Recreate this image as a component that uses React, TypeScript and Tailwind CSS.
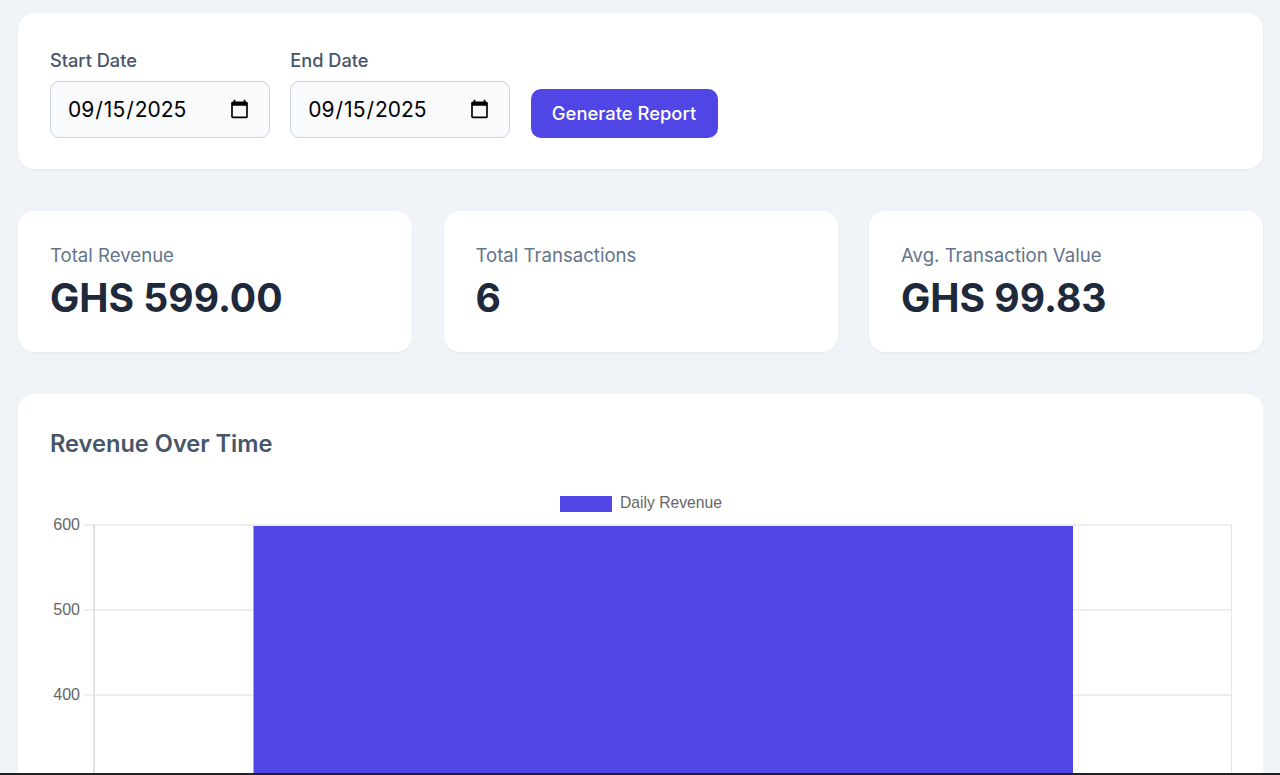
const font = { fontFamily: 'Inter, "Liberation Sans", sans-serif' };

function DateField({ label }: { label: string }) {
  return (
    <div className="flex w-[219.75px] flex-col">
      <label className="mb-[6px] h-[30px] text-[18.2px] leading-[30px] font-medium text-[#475569]">{label}</label>
      <input
        type="date"
        defaultValue="2025-09-15"
        className="h-[57px] w-[219.75px] rounded-[9px] border border-[#cbd5e1] bg-[#f8fafc] pr-[17px] pl-[16px] text-[21px] text-black"
      />
    </div>
  );
}

function Stat({ label, value }: { label: string; value: string }) {
  return (
    <div className="h-[141px] rounded-[16px] bg-white px-[32px] pt-[31px] shadow-[0_1px_3px_rgba(15,23,42,0.05)]">
      <div className="h-[26px] text-[18.6px] leading-[26px] text-[#64748b]">{label}</div>
      <div className="mt-[4px] text-[39.1px] leading-[52px] font-bold text-[#1e293b]">{value}</div>
    </div>
  );
}

function Chart() {
  const ticks = [
    { y: 525, label: '600' },
    { y: 610, label: '500' },
    { y: 695, label: '400' },
  ];
  return (
    <svg width="1200" height="290" viewBox="50 490 1200 290" className="mt-[29px] block" style={{ fontFamily: '"Liberation Sans", Arial, sans-serif' }}>
      <rect x="560" y="496" width="52" height="16" fill="#4f46e5" />
      <text x="620" y="508" fontSize="15.7" fill="#666666">Daily Revenue</text>
      {ticks.map((t) => (
        <g key={t.y}>
          <line x1="84" x2="1232" y1={t.y} y2={t.y} stroke="#e8e8e8" strokeWidth="1.3" />
          <text x="80" y={t.y + 4.5} fontSize="16" fill="#666666" textAnchor="end">{t.label}</text>
        </g>
      ))}
      <line x1="94" x2="94" y1="525" y2="780" stroke="#d9d9d9" strokeWidth="1.5" />
      <line x1="1231.5" x2="1231.5" y1="525" y2="780" stroke="#e5e5e5" />
      <rect x="253.5" y="526" width="819.5" height="254" fill="#4f46e5" />
    </svg>
  );
}

export default function App() {
  return (
    <div className="flex h-[775px] w-full flex-col overflow-hidden bg-[#f0f4f8]" style={font}>
      <div className="flex min-h-0 flex-1 flex-col gap-[42px] pt-[13px] pr-[17px] pl-[18px]">
        <section className="flex h-[156px] shrink-0 items-end gap-[20.5px] rounded-[16px] bg-white px-[32px] pb-[31px] shadow-[0_1px_3px_rgba(15,23,42,0.05)]">
          <DateField label="Start Date" />
          <DateField label="End Date" />
          <button className="h-[49px] w-[187px] rounded-[10px] bg-[#4f46e5] text-[18.4px] font-medium text-white">Generate Report</button>
        </section>
        <section className="grid shrink-0 grid-cols-3 gap-[31.5px]">
          <Stat label="Total Revenue" value="GHS 599.00" />
          <Stat label="Total Transactions" value="6" />
          <Stat label="Avg. Transaction Value" value="GHS 99.83" />
        </section>
        <section className="flex-1 rounded-t-[16px] bg-white pt-[32px] pl-[32px]">
          <h2 className="h-[35px] text-[23.6px] leading-[35px] font-semibold text-[#475569]">Revenue Over Time</h2>
          <Chart />
        </section>
      </div>
      <div className="h-[2px] shrink-0 bg-[#1f2328]" />
    </div>
  );
}
